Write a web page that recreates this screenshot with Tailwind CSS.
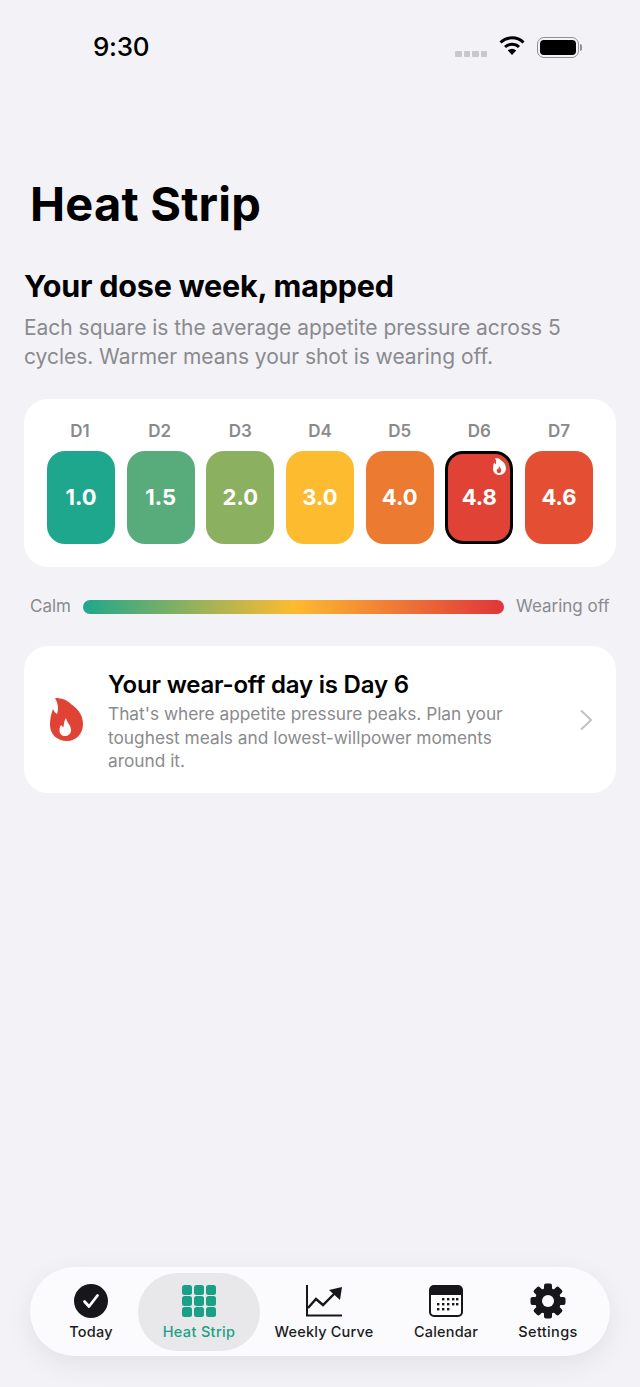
<!DOCTYPE html>
<html lang="en">

<head>
    <meta charset="UTF-8">
    <meta name="viewport" content="width=device-width, initial-scale=1.0">
    <title>Heat Strip</title>
    <script src="https://cdn.jsdelivr.net/npm/@tailwindcss/browser@4"></script>
</head>

<body class="bg-[#f2f2f7] font-['Inter',sans-serif] text-black">
    <div class="w-[640px] h-[1387px] flex flex-col overflow-hidden">

        <!-- Status bar -->
        <div class="h-[94px] pt-[31px] pl-[93px] pr-[58px] flex items-start justify-between shrink-0">
            <span class="text-[26px] leading-[32px] font-medium tracking-[-0.3px]">9:30</span>
            <div class="flex items-center h-[32px]">
                <div class="flex gap-[2px] mt-[13px] mr-[12px]">
                    <span class="w-[6.500px] h-[6px] rounded-[1px] bg-[#c7c7cc]"></span>
                    <span class="w-[6.500px] h-[6px] rounded-[1px] bg-[#c7c7cc]"></span>
                    <span class="w-[6.500px] h-[6px] rounded-[1px] bg-[#c7c7cc]"></span>
                    <span class="w-[6.500px] h-[6px] rounded-[1px] bg-[#c7c7cc]"></span>
                </div>
                <svg width="26" height="22" viewBox="0 0 26 22" class="mt-[-3px] mr-[12px]">
                    <path d="M1.500 7.500a16.500 16.500 0 0 1 23 0" fill="none" stroke="#000" stroke-width="3"/>
                    <path d="M6 12a10.200 10.200 0 0 1 14 0" fill="none" stroke="#000" stroke-width="3"/>
                    <path d="M8.800 15.400a6 6 0 0 1 8.400 0L13 20z" fill="#000"/>
                </svg>
                <div class="flex items-center gap-[1px]">
                    <div class="w-[42px] h-[21px] rounded-[7px] border-[1.5px] border-[#8e8e93] p-[2px]">
                        <div class="w-full h-full rounded-[4px] bg-black"></div>
                    </div>
                    <span class="w-[2px] h-[7px] rounded-r-[2px] bg-[#8e8e93]"></span>
                </div>
            </div>
        </div>

        <!-- Title -->
        <h1 class="pl-[30px] mt-[79px] text-[47px] leading-[62px] font-bold tracking-[0.2px]">Heat Strip</h1>

        <div class="px-[24px] shrink-0">
            <h2 class="mt-[32px] text-[30.500px] leading-[38px] font-bold tracking-[-0.2px]">Your dose week, mapped</h2>
            <p class="mt-[8px] text-[21px] leading-[29px] tracking-[-0.03px] text-[#8a8a8e]">Each square is the average appetite pressure across 5 cycles. Warmer means your shot is wearing off.</p>

            <!-- Day grid -->
            <div class="mt-[28px] h-[168px] bg-white rounded-[24px] px-[23px] pt-[22px]">
                <div class="grid grid-cols-7 gap-x-[11.700px]">
                    <div class="flex flex-col items-center">
                        <span class="text-[17px] leading-[21px] font-semibold text-[#8a8a8e] -ml-[2px]">D1</span>
                        <div class="mt-[9px] w-full h-[93px] rounded-[18px] bg-[#1fa78d] flex items-center justify-center text-white text-[22px] font-bold">1.0</div>
                    </div>
                    <div class="flex flex-col items-center">
                        <span class="text-[17px] leading-[21px] font-semibold text-[#8a8a8e] -ml-[2px]">D2</span>
                        <div class="mt-[9px] w-full h-[93px] rounded-[18px] bg-[#58ab7b] flex items-center justify-center text-white text-[22px] font-bold">1.5</div>
                    </div>
                    <div class="flex flex-col items-center">
                        <span class="text-[17px] leading-[21px] font-semibold text-[#8a8a8e]">D3</span>
                        <div class="mt-[9px] w-full h-[93px] rounded-[18px] bg-[#8bb05f] flex items-center justify-center text-white text-[22px] font-bold">2.0</div>
                    </div>
                    <div class="flex flex-col items-center">
                        <span class="text-[17px] leading-[21px] font-semibold text-[#8a8a8e]">D4</span>
                        <div class="mt-[9px] w-full h-[93px] rounded-[18px] bg-[#fdbb30] flex items-center justify-center text-white text-[22px] font-bold">3.0</div>
                    </div>
                    <div class="flex flex-col items-center">
                        <span class="text-[17px] leading-[21px] font-semibold text-[#8a8a8e]">D5</span>
                        <div class="mt-[9px] w-full h-[93px] rounded-[18px] bg-[#ec7a30] flex items-center justify-center text-white text-[22px] font-bold">4.0</div>
                    </div>
                    <div class="flex flex-col items-center">
                        <span class="text-[17px] leading-[21px] font-semibold text-[#8a8a8e]">D6</span>
                        <div class="relative mt-[9px] w-full h-[93px] rounded-[18px] bg-[#e04335] border-[3px] border-black flex items-center justify-center text-white text-[22px] font-bold">
                            4.8
                            <svg width="13" height="17" viewBox="0 0 33 43" class="absolute top-[4px] right-[4px]">
                                <path fill-rule="evenodd" fill="#fff" d="M5 0C12 0 17 2 21 6C28 11 33 17 33 26C33 36 26 43 17 43C7 43 0 36 0 27C0 21 1 16 3 11C4 13 5 15 7 16C9 11 8 5 5 0zM16 20C14 23 14 26 13.500 29C12.500 29 12 28 11 27C10 28 9.500 30 9.500 32C9.500 36 12 38 15 38C18 38 21 36 21 32C21 27 17 25 16 20z"/>
                            </svg>
                        </div>
                    </div>
                    <div class="flex flex-col items-center">
                        <span class="text-[17px] leading-[21px] font-semibold text-[#8a8a8e]">D7</span>
                        <div class="mt-[9px] w-full h-[93px] rounded-[18px] bg-[#e44f33] flex items-center justify-center text-white text-[22px] font-bold">4.6</div>
                    </div>
                </div>
            </div>

            <!-- Legend -->
            <div class="mt-[26px] px-[6px] flex items-center h-[28px]">
                <span class="text-[17px] text-[#8a8a8e] w-[53px] shrink-0">Calm</span>
                <div class="w-[421px] h-[14px] -mt-[1px] shrink-0 rounded-full bg-[linear-gradient(90deg,#1fa78d,#fdbb30_50%,#e0353a)]"></div>
                <span class="ml-[12px] text-[17px] text-[#8a8a8e] whitespace-nowrap">Wearing off</span>
            </div>

            <!-- Wear-off card -->
            <div class="mt-[25px] h-[147px] bg-white rounded-[24px] pl-[26px] pr-[23px] flex items-center">
                <svg width="33" height="43" viewBox="0 0 33 43" class="shrink-0">
                    <path fill-rule="evenodd" fill="#e04335" d="M5 0C12 0 17 2 21 6C28 11 33 17 33 26C33 36 26 43 17 43C7 43 0 36 0 27C0 21 1 16 3 11C4 13 5 15 7 16C9 11 8 5 5 0zM16 20C14 23 14 26 13.500 29C12.500 29 12 28 11 27C10 28 9.500 30 9.500 32C9.500 36 12 38 15 38C18 38 21 36 21 32C21 27 17 25 16 20z"/>
                </svg>
                <div class="ml-[25px] pt-[4px] flex-1 min-w-0">
                    <div class="text-[24px] leading-[30px] font-semibold tracking-[-0.2px]">Your wear-off day is Day 6</div>
                    <p class="mt-[2px] max-w-[420px] text-[17.300px] leading-[23.500px] text-[#8a8a8e]">That's where appetite pressure peaks. Plan your toughest meals and lowest-willpower moments around it.</p>
                </div>
                <svg width="14" height="22" viewBox="0 0 14 22" class="shrink-0 ml-[10px]">
                    <path d="M2 1.500 12 11 2 20.500" fill="none" stroke="#c4c4c8" stroke-width="2.200"/>
                </svg>
            </div>
        </div>

        <!-- Tab bar -->
        <nav class="mt-auto mb-[31px] mx-[30px] h-[89px] rounded-full bg-[#fbfbfd] shadow-[0_8px_28px_rgba(0,0,0,0.07)] flex items-center px-[4px] shrink-0">
            <div class="w-[104px] h-[78px] pl-[10px] flex flex-col items-center pt-[11px]">
                <svg width="34" height="34" viewBox="0 0 34 34">
                    <circle cx="17" cy="17" r="17" fill="#17171b"/>
                    <path d="M10.500 17.500 15 22.500 23.500 11.500" fill="none" stroke="#fff" stroke-width="2.800" stroke-linecap="round" stroke-linejoin="round"/>
                </svg>
                <span class="mt-[4px] text-[14.500px] leading-[20px] font-[450] tracking-[0.2px] text-[#1c1c1e]">Today</span>
            </div>
            <div class="w-[122px] h-[78px] rounded-full bg-[#e8e8ea] flex flex-col items-center pt-[12px]">
                <div class="grid grid-cols-3 gap-x-[2px] gap-y-[1px]">
                    <span class="w-[10px] h-[10px] rounded-[2.500px] bg-[#1ba088]"></span>
                    <span class="w-[10px] h-[10px] rounded-[2.500px] bg-[#1ba088]"></span>
                    <span class="w-[10px] h-[10px] rounded-[2.500px] bg-[#1ba088]"></span>
                    <span class="w-[10px] h-[10px] rounded-[2.500px] bg-[#1ba088]"></span>
                    <span class="w-[10px] h-[10px] rounded-[2.500px] bg-[#1ba088]"></span>
                    <span class="w-[10px] h-[10px] rounded-[2.500px] bg-[#1ba088]"></span>
                    <span class="w-[10px] h-[10px] rounded-[2.500px] bg-[#1ba088]"></span>
                    <span class="w-[10px] h-[10px] rounded-[2.500px] bg-[#1ba088]"></span>
                    <span class="w-[10px] h-[10px] rounded-[2.500px] bg-[#1ba088]"></span>
                </div>
                <span class="mt-[5px] text-[14.500px] leading-[20px] font-medium tracking-[0.35px] text-[#1ba088]">Heat Strip</span>
            </div>
            <div class="w-[128px] h-[78px] flex flex-col items-center pt-[11px]">
                <svg width="38" height="34" viewBox="0 0 38 34">
                    <path d="M2 1V31.500H37" fill="none" stroke="#17171b" stroke-width="2"/>
                    <path d="M3 24 11 15 18 21 30 9" fill="none" stroke="#17171b" stroke-width="2.400"/>
                    <path d="M24 6 37 3 35 16z" fill="#17171b"/>
                </svg>
                <span class="mt-[4px] text-[14.500px] leading-[20px] font-[450] tracking-[0.2px] text-[#1c1c1e]">Weekly Curve</span>
            </div>
            <div class="w-[116px] h-[78px] flex flex-col items-center pt-[11px]">
                <svg width="34" height="32" viewBox="0 0 34 32" class="my-[1px]">
                    <rect x="1" y="1" width="32" height="30" rx="4" fill="#fff" stroke="#17171b" stroke-width="2"/>
                    <path d="M1 5a4 4 0 0 1 4-4h24a4 4 0 0 1 4 4v5H1z" fill="#17171b"/>
                    <g fill="#17171b">
                        <rect x="13" y="13" width="2.400" height="2.400"/><rect x="18" y="13" width="2.400" height="2.400"/><rect x="23" y="13" width="2.400" height="2.400"/><rect x="27" y="13" width="2.400" height="2.400"/>
                        <rect x="8" y="18" width="2.400" height="2.400"/><rect x="13" y="18" width="2.400" height="2.400"/><rect x="18" y="18" width="2.400" height="2.400"/><rect x="23" y="18" width="2.400" height="2.400"/><rect x="27" y="18" width="2.400" height="2.400"/>
                        <rect x="8" y="23" width="2.400" height="2.400"/><rect x="13" y="23" width="2.400" height="2.400"/><rect x="18" y="23" width="2.400" height="2.400"/>
                    </g>
                </svg>
                <span class="mt-[4px] text-[14.500px] leading-[20px] font-[450] tracking-[0.2px] text-[#1c1c1e]">Calendar</span>
            </div>
            <div class="w-[88px] h-[78px] flex flex-col items-center pt-[10px]">
                <svg width="36" height="36" viewBox="0 0 36 36">
                    <g fill="#17171b">
                        <circle cx="18" cy="18" r="13"/>
                        <rect x="14" y="0.500" width="8" height="35" rx="2"/>
                        <rect x="14" y="0.500" width="8" height="35" rx="2" transform="rotate(45 18 18)"/>
                        <rect x="14" y="0.500" width="8" height="35" rx="2" transform="rotate(90 18 18)"/>
                        <rect x="14" y="0.500" width="8" height="35" rx="2" transform="rotate(135 18 18)"/>
                    </g>
                    <circle cx="18" cy="18" r="6" fill="#fbfbfd"/>
                </svg>
                <span class="mt-[3px] text-[14.500px] leading-[20px] font-[450] tracking-[0.35px] text-[#1c1c1e]">Settings</span>
            </div>
        </nav>
    </div>
</body>

</html>
